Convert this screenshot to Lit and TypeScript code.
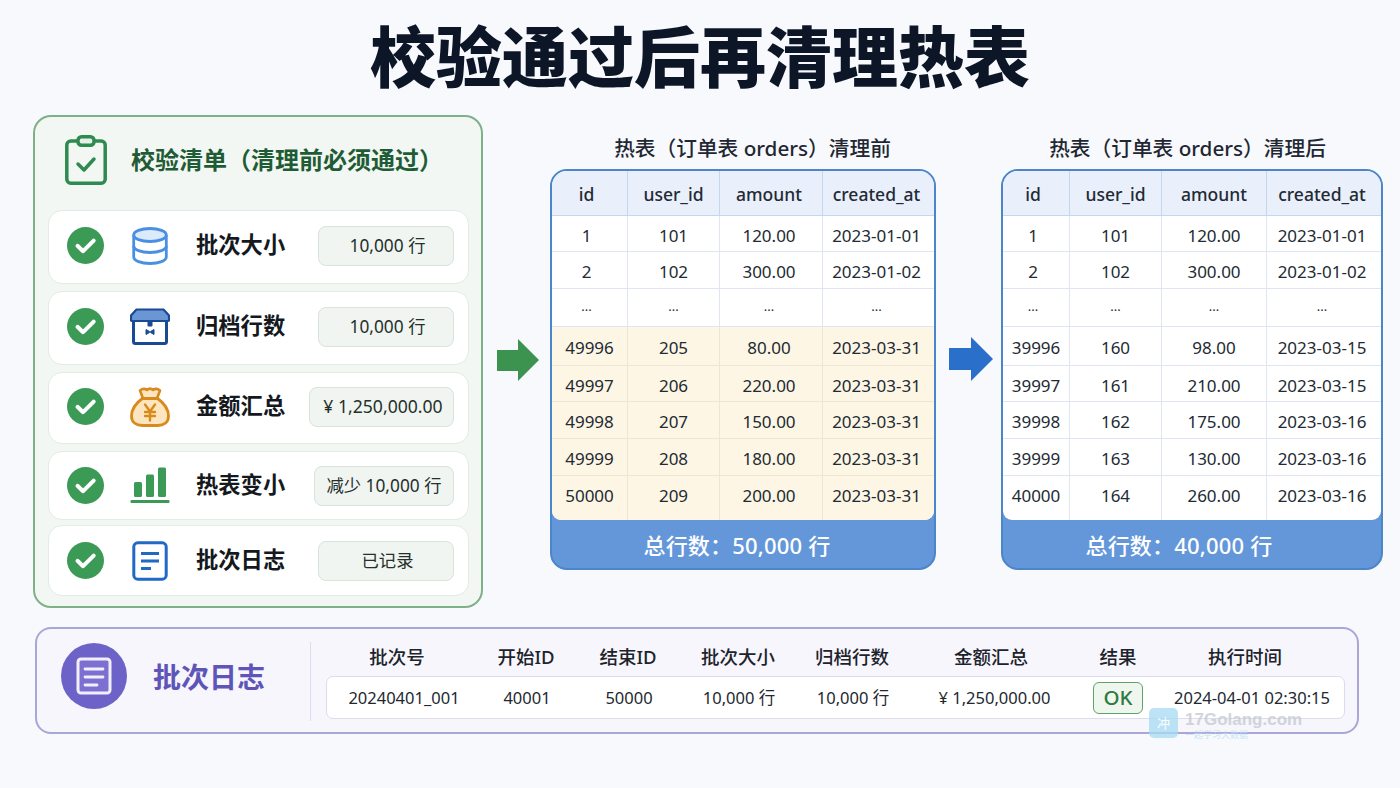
import { html, css, LitElement, svg } from 'lit'
import { customElement } from 'lit/decorators.js'

const okMark = svg`<circle cx="18.5" cy="18.5" r="18.5" fill="#3c9a57" /><path d="M10.5 18.8l5.6 5.4 10.6-10.6" fill="none" stroke="#fff" stroke-width="4" stroke-linecap="round" stroke-linejoin="round" />`

const icons = {
    db: svg`<svg width="36" height="38" viewBox="0 0 36 38">
        <ellipse cx="18" cy="8" rx="16.3" ry="6.5" fill="#dcebfb" stroke="#4a90e2" stroke-width="2.8" />
        <path d="M1.7 8v22c0 3.600 7.300 6.500 16.300 6.500s16.300-2.900 16.300-6.500V8" fill="none" stroke="#4a90e2" stroke-width="2.8" />
        <path d="M1.700 19c0 3.600 7.300 6.500 16.300 6.500s16.300-2.900 16.300-6.500" fill="none" stroke="#4a90e2" stroke-width="2.8" />
    </svg>`,
    box: svg`<svg width="40" height="37" viewBox="0 0 40 37">
        <path d="M3.500 12h33v21.500a2 2 0 0 1-2 2h-29a2 2 0 0 1-2-2z" fill="#fff" stroke="#1b4a94" stroke-width="3" />
        <path d="M6.500 1.500h27L39 7.500v4.500a1 1 0 0 1-1 1H2a1 1 0 0 1-1-1V7.500z" fill="#6b96d4" stroke="#1b4a94" stroke-width="2.200" stroke-linejoin="round" />
        <path d="M17.500 13h5v4.500a1 1 0 0 1-1 1h-3a1 1 0 0 1-1-1z" fill="#1b4a94" />
        <path d="M16 21.500l3.500 2v1l-3.500 2zM24 21.500l-3.500 2v1l3.500 2z" fill="#1b4a94" stroke="#1b4a94" stroke-width="1" stroke-linejoin="round" />
    </svg>`,
    bag: svg`<svg width="40" height="41" viewBox="0 0 40 41">
        <path d="M13 12C6 17 1.500 24 1.500 30c0 6.500 5 9.500 11 9.500h15c6 0 11-3 11-9.500 0-6-4.500-13-11.500-18z" fill="#fde6bf" stroke="#d98a1c" stroke-width="2.800" stroke-linejoin="round" />
        <path d="M13 12.500L10 4.500c3 -2.500 5 -2 7 -.5 2-2 4-2 6 0 2-1.500 4-2 7 .5l-3 8z" fill="#fde6bf" stroke="#d98a1c" stroke-width="2.600" stroke-linejoin="round" />
        <path d="M12.500 12.500h15" stroke="#d98a1c" stroke-width="3" stroke-linecap="round" />
        <path d="M15 18.500l5 7 5-7M20 25.500v9M15 26h10M15 30h10" fill="none" stroke="#d98a1c" stroke-width="2.400" stroke-linecap="round" stroke-linejoin="round" />
    </svg>`,
    bars: svg`<svg width="40" height="37" viewBox="0 0 40 37">
        <rect x="4" y="15" width="8" height="15" rx="1.500" fill="#3c9a57" />
        <rect x="16" y="7.500" width="8" height="22.500" rx="1.500" fill="#3c9a57" />
        <rect x="28" y="0.500" width="8" height="29.500" rx="1.500" fill="#3c9a57" />
        <rect x="0.500" y="33" width="39" height="3" rx="1" fill="#3c9a57" />
    </svg>`,
    doc: svg`<svg width="36" height="40" viewBox="0 0 36 40">
        <rect x="1.800" y="1.800" width="32.400" height="36.400" rx="4" fill="#fff" stroke="#2069c4" stroke-width="3" />
        <path d="M9 12.500h18M9 20h18M9 27.500h10" stroke="#2069c4" stroke-width="2.800" />
    </svg>`,
}

const checks = [
    { icon: icons.db, label: '批次大小', value: '10,000 行', cls: '' },
    { icon: icons.box, label: '归档行数', value: '10,000 行', cls: '' },
    { icon: icons.bag, label: '金额汇总', value: '¥ 1,250,000.00', cls: 'money' },
    { icon: icons.bars, label: '热表变小', value: '减少 10,000 行', cls: 'less' },
    { icon: icons.doc, label: '批次日志', value: '已记录', cls: '' },
]

const head = ['id', 'user_id', 'amount', 'created_at']
const top = [
    ['1', '101', '120.00', '2023-01-01'],
    ['2', '102', '300.00', '2023-01-02'],
    ['...', '...', '...', '...'],
]

const before = [
    ['49996', '205', '80.00', '2023-03-31'],
    ['49997', '206', '220.00', '2023-03-31'],
    ['49998', '207', '150.00', '2023-03-31'],
    ['49999', '208', '180.00', '2023-03-31'],
    ['50000', '209', '200.00', '2023-03-31'],
]

const after = [
    ['39996', '160', '98.00', '2023-03-15'],
    ['39997', '161', '210.00', '2023-03-15'],
    ['39998', '162', '175.00', '2023-03-16'],
    ['39999', '163', '130.00', '2023-03-16'],
    ['40000', '164', '260.00', '2023-03-16'],
]

const logHead = ['批次号', '开始ID', '结束ID', '批次大小', '归档行数', '金额汇总', '结果', '执行时间']
const logRow = ['20240401_001', '40001', '50000', '10,000 行', '10,000 行', '¥ 1,250,000.00', 'OK', '2024-04-01 02:30:15']

@customElement('app-root')
export class AppRoot extends LitElement {
    static styles = css`
        :host {
            display: block;
            position: relative;
            width: 1400px;
            height: 788px;
            overflow: hidden;
            background: #f7f9fd;
            color: #1d2733;
            font-family: 'Noto Sans', 'Noto Sans CJK SC', sans-serif;
            text-spacing-trim: space-all;
        }

        h1 {
            margin: 0;
            height: 115px;
            display: flex;
            justify-content: center;
            align-items: center;
            padding-bottom: 4px;
            box-sizing: border-box;
            font-size: 66px;
            line-height: 1;
            font-weight: 900;
            color: #0d1626;
        }

        .main {
            display: flex;
            align-items: flex-start;
            padding-left: 33px;
        }

        .checklist {
            box-sizing: border-box;
            width: 450px;
            height: 493px;
            border: 2px solid #7fb088;
            border-radius: 18px;
            background: #f2f7f3;
            padding: 0 12px 0 13px;
        }

        .check-head {
            box-sizing: border-box;
            height: 93px;
            display: flex;
            align-items: center;
            padding: 0 0 8px 17px;
            gap: 24px;
        }

        .check-head span {
            font-size: 24px;
            font-weight: 700;
            color: #1f5c35;
            line-height: 1;
        }

        .rows {
            display: grid;
            grid-template-rows: 74px 74px 72px 69px 69px;
            row-gap: 7px;
        }

        .row {
            box-sizing: border-box;
            display: flex;
            align-items: center;
            background: #fff;
            border: 1.5px solid #e2ebe4;
            border-radius: 14px;
            padding: 0 14px 0 18px;
        }

        .row:nth-child(-n + 3) {
            padding-bottom: 3px;
        }

        .row:last-child {
            margin-top: -2px;
        }

        .mark {
            flex: none;
        }

        .glyph {
            flex: none;
            width: 44px;
            margin-left: 24px;
            display: flex;
            justify-content: center;
        }

        .label {
            margin-left: 24px;
            font-size: 22.3px;
            font-weight: 700;
            line-height: 1;
            color: #15191e;
        }

        .badge {
            box-sizing: border-box;
            margin-left: auto;
            width: 136px;
            height: 40px;
            display: flex;
            align-items: center;
            justify-content: center;
            padding-left: 3px;
            background: #f0f5f1;
            border: 1.5px solid #d8e3da;
            border-radius: 8px;
            font-size: 17.3px;
            line-height: 1;
            color: #26302a;
        }

        .badge.money {
            width: 145px;
            font-size: 17.6px;
        }

        .badge.less {
            width: 140px;
            padding-left: 0;
        }

        .arrow {
            flex: none;
            display: block;
        }

        .arrow.green {
            margin: 224px 0 0 14px;
        }

        .arrow.blue {
            margin: 222px 0 0 13px;
        }

        .panel {
            flex: none;
        }

        .panel.one {
            width: 386px;
            margin-left: 11px;
        }

        .panel.two {
            width: 382px;
            margin-left: 8px;
        }

        .caption {
            height: 54px;
            display: flex;
            align-items: center;
            justify-content: center;
            box-sizing: border-box;
            font-size: 20.7px;
            font-weight: 500;
            line-height: 1;
            white-space: pre;
            color: #1f2732;
        }

        .one .caption {
            padding: 12px 0 0 19px;
        }

        .two .caption {
            padding: 12px 9px 0 0;
        }

        .frame {
            box-sizing: border-box;
            border: 2px solid #4a86c8;
            border-radius: 17px;
            background: #6497da;
            overflow: hidden;
            height: 401px;
        }

        .grid {
            display: grid;
            grid-template-rows: 45px 36px 37px 38px 39px 36px 37px 37px 44px;
            background: #fff;
            border-radius: 0 0 9px 9px;
            overflow: hidden;
            height: 349px;
        }

        .one .grid {
            grid-template-columns: 76px 92px 103px 1fr;
        }

        .two .grid {
            grid-template-columns: 67px 92px 105px 1fr;
        }

        .cell {
            display: flex;
            align-items: center;
            justify-content: center;
            padding-top: 3px;
            font-size: 17px;
            line-height: 1;
            color: #232a33;
            border-right: 1.5px solid #dfe5f1;
            border-bottom: 1.5px solid #dfe5f1;
        }

        .cell.short:nth-child(4n + 1) {
            padding-right: 6px;
        }

        .one .cell:nth-child(4n + 3) {
            padding-right: 4px;
        }

        .cell:nth-child(4n) {
            border-right: none;
            padding-right: 4px;
        }

        .cell.th {
            background: #e9f0fb;
            border-color: #c5d7ee;
            font-weight: 500;
            font-size: 17.5px;
        }

        .cell.dots {
            padding-top: 0;
            padding-bottom: 2px;
            font-size: 13px;
        }

        .cell.hot {
            background: #fdf6e4;
            border-color: #eee6d2;
        }

        .cell.end {
            border-bottom: none;
            padding-bottom: 9px;
        }

        .total {
            height: 48px;
            display: flex;
            align-items: center;
            justify-content: center;
            padding-top: 2px;
            box-sizing: border-box;
            font-size: 22px;
            letter-spacing: 0.2px;
            font-weight: 500;
            line-height: 1;
            color: #fff;
        }

        .one .total {
            padding-right: 12px;
        }

        .two .total {
            padding-right: 26px;
        }

        .log {
            box-sizing: border-box;
            position: absolute;
            left: 35px;
            top: 627px;
            width: 1324px;
            height: 107px;
            display: flex;
            border: 2px solid #aaa6d8;
            border-radius: 16px;
            background: #f6f6fc;
        }

        .log-mark {
            margin: 14px 0 0 24px;
            width: 66px;
            height: 66px;
            flex: none;
            border-radius: 50%;
            background: #6d62c8;
            display: flex;
            align-items: center;
            justify-content: center;
        }

        .log-title {
            flex: none;
            width: 157px;
            margin-left: 26px;
            font-size: 28px;
            font-weight: 700;
            line-height: 96px;
            color: #5f55b8;
        }

        .log-body {
            flex: 1;
            margin: 13px 12px 0 0;
            height: 79px;
            padding-left: 15px;
            border-left: 1.5px solid #dcdcec;
        }

        .log-head,
        .log-values {
            display: grid;
            text-align: center;
            align-items: center;
        }

        .log-head {
            height: 34px;
            grid-template-columns: 142px 116px 88px 132px 96px 182px 72px 182px;
            font-size: 18.5px;
            font-weight: 500;
            line-height: 1;
            color: #1d232b;
            padding-bottom: 4px;
            box-sizing: border-box;
        }

        .log-values {
            box-sizing: border-box;
            height: 43px;
            grid-template-columns: 154px 92px 112px 108px 120px 163px 84px 1fr;
            background: #fff;
            border: 1.5px solid #dcdcee;
            border-radius: 7px;
            font-size: 16.5px;
            line-height: 1;
            color: #23282f;
        }

        .log-values .val {
            padding-top: 2px;
        }

        .ok {
            justify-self: center;
            box-sizing: border-box;
            width: 50px;
            height: 32px;
            display: flex;
            align-items: center;
            justify-content: center;
            background: #eef6ee;
            border: 1.5px solid #5da36a;
            border-radius: 6px;
            font-size: 20.5px;
            font-weight: 500;
            color: #2e7a41;
        }

        .watermark {
            position: absolute;
            left: 1149px;
            top: 708px;
            display: flex;
            gap: 7px;
            opacity: 0.75;
            pointer-events: none;
        }

        .wm-icon {
            box-sizing: border-box;
            width: 29px;
            height: 30px;
            border-radius: 5px;
            background: #a7dcf3;
            display: flex;
            align-items: center;
            justify-content: center;
            font-size: 13px;
            line-height: 1;
            color: #fff;
        }

        .wm-name {
            margin-top: 2px;
            font-family: 'Liberation Sans', sans-serif;
            font-weight: 700;
            font-size: 17px;
            line-height: 20px;
            color: #c3c8d0;
        }

        .wm-sub {
            font-size: 9px;
            line-height: 9px;
            color: #bcdcf4;
        }
    `

    __table(cls: string, title: string, rows: string[][], hot: boolean, total: string) {
        return html`
            <div class="panel ${cls}">
                <div class="caption">${title}</div>
                <div class="frame">
                    <div class="grid">
                        ${head.map((h) => html`<div class="cell th short">${h}</div>`)}
                        ${top.map((r) =>
                            r.map((c) => html`<div class="cell short ${c === '...' ? 'dots' : ''}">${c}</div>`)
                        )}
                        ${rows.map((r, i) =>
                            r.map(
                                (c) =>
                                    html`<div class="cell ${hot ? 'hot' : ''} ${i === rows.length - 1 ? 'end' : ''}">
                                        ${c}
                                    </div>`
                            )
                        )}
                    </div>
                    <div class="total">${total}</div>
                </div>
            </div>
        `
    }

    render() {
        return html`
            <h1>校验通过后再清理热表</h1>
            <div class="main">
                <section class="checklist">
                    <div class="check-head">
                        <svg width="42" height="50" viewBox="0 0 42 50">
                            <rect x="1.800" y="6" width="38.400" height="42.200" rx="4" fill="none" stroke="#2f8a4f" stroke-width="3.500" />
                            <rect x="13" y="1.800" width="16" height="8.500" rx="3.500" fill="#e6f0e8" stroke="#2f8a4f" stroke-width="3.500" />
                            <path d="M13 29l6 6 10-11" fill="none" stroke="#2f8a4f" stroke-width="3.500" stroke-linecap="round" stroke-linejoin="round" />
                        </svg>
                        <span>校验清单（清理前必须通过）</span>
                    </div>
                    <div class="rows">
                        ${checks.map(
                            (c) => html`
                                <div class="row">
                                    <svg class="mark" width="37" height="37" viewBox="0 0 37 37">${okMark}</svg>
                                    <div class="glyph">${c.icon}</div>
                                    <div class="label">${c.label}</div>
                                    <div class="badge ${c.cls}">${c.value}</div>
                                </div>
                            `
                        )}
                    </div>
                </section>

                <svg class="arrow green" width="42" height="42" viewBox="0 0 42 42">
                    <path d="M0 11h21V0l21 21-21 21V32H0z" fill="#3c9350" />
                </svg>

                ${this.__table('one', '热表（订单表 orders）清理前', before, true, '总行数：50,000 行')}

                <svg class="arrow blue" width="44" height="44" viewBox="0 0 44 44">
                    <path d="M0 11h22V0l22 22-22 22V33H0z" fill="#2a6fc9" />
                </svg>

                ${this.__table('two', '热表（订单表 orders）清理后', after, false, '总行数：40,000 行')}
            </div>

            <section class="log">
                <div class="log-mark">
                    <svg width="36" height="38" viewBox="0 0 36 38">
                        <path d="M5 2h26a3 3 0 0 1 3 3v28a3 3 0 0 1-3 3H5a3 3 0 0 1-3-3V5a3 3 0 0 1 3-3z" fill="#7b70d2" stroke="#f1effb" stroke-width="3" />
                        <path d="M9 12h18M9 20h18M9 28h12" stroke="#f1effb" stroke-width="2.800" stroke-linecap="round" />
                    </svg>
                </div>
                <div class="log-title">批次日志</div>
                <div class="log-body">
                    <div class="log-head">${logHead.map((h) => html`<div>${h}</div>`)}</div>
                    <div class="log-values">
                        ${logRow.map((v) =>
                            v === 'OK' ? html`<div class="ok">OK</div>` : html`<div class="val">${v}</div>`
                        )}
                    </div>
                </div>
            </section>

            <div class="watermark">
                <div class="wm-icon">冲</div>
                <div>
                    <div class="wm-name">17Golang.com</div>
                    <div class="wm-sub">一起学习大数据</div>
                </div>
            </div>
        `
    }
}
